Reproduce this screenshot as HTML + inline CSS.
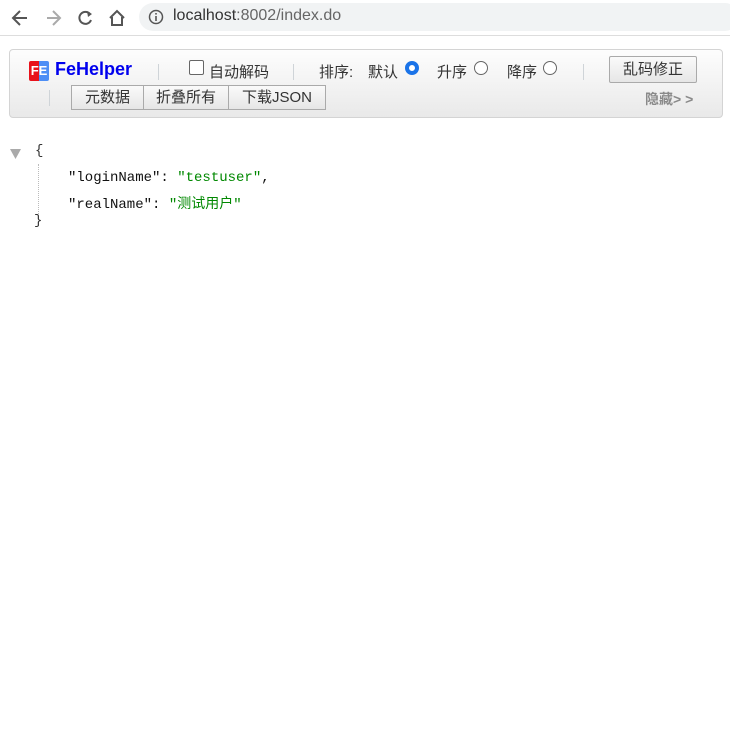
<!DOCTYPE html>
<html><head><meta charset="utf-8"><style>
body{margin:0;width:730px;height:729px;background:#fff;font-family:"Liberation Sans","Noto Sans CJK SC",sans-serif;position:relative;overflow:hidden}
.a{position:absolute;white-space:nowrap}
.sep{position:absolute;width:1px;height:16px;background:#cfd4d8}
.btn{position:absolute;box-sizing:border-box;border:1px solid #aaa;background:linear-gradient(#fafafa,#e6e6e6);font-size:14px;color:#333;text-align:center;line-height:24px}
.radio{position:absolute;width:14px;height:14px;border:1px solid #666;border-radius:50%;box-sizing:border-box;background:#fff}
.mono{font-family:"Liberation Mono","Noto Sans CJK SC",monospace;font-size:14px}
</style></head><body>
<div class="a" style="left:0;top:0;width:730px;height:35px;background:#fff;border-bottom:1px solid #ddd"></div>
<svg class="a" style="left:10px;top:8px" width="120" height="20" viewBox="0 0 120 20">
<path d="M17 10H4M10 3L3 10L10 17" stroke="#555" stroke-width="2" fill="none"/>
<path d="M37 10H50M43 3L50 10L43 17" stroke="#aaa" stroke-width="2" fill="none"/>
<path d="M80 6A6 6 0 1 0 81 12" stroke="#555" stroke-width="2" fill="none"/><path d="M77 3L82 6L78 9Z" fill="#555"/>
<path d="M100 10L107 3L114 10M102 9V17H112V9" stroke="#555" stroke-width="2" fill="none"/>
</svg>
<div class="a" style="left:139px;top:3px;width:600px;height:28px;border-radius:14px;background:#f1f3f4"></div>
<svg class="a" style="left:148px;top:9px" width="16" height="16"><circle cx="8" cy="8" r="6.5" stroke="#555" stroke-width="1.5" fill="none"/><rect x="7.2" y="7" width="1.6" height="5" fill="#555"/><rect x="7.2" y="4" width="1.6" height="1.6" fill="#555"/></svg>
<div class="a" style="left:173px;top:7px;font-size:16px;color:#333">localhost<span style="color:#666">:8002/index.do</span></div>
<div class="a" style="left:9px;top:49px;width:714px;height:69px;box-sizing:border-box;border:1px solid #d4d4d4;border-radius:4px;background:linear-gradient(#fdfdfd,#e9e9e9)"></div>
<div class="a" style="left:29px;top:61px;width:20px;height:20px;background:linear-gradient(90deg,#e8121b 50%,#4d8ef5 50%);color:#fff;font-weight:bold;font-size:13px;line-height:20px;text-align:center;border-radius:2px">FE</div>
<div class="a" style="left:55px;top:59px;font-size:18px;font-weight:bold;color:#0000ee">FeHelper</div>
<div class="sep" style="left:158px;top:64px"></div>
<div class="a" style="left:189px;top:60px;width:15px;height:15px;border:1px solid #666;border-radius:2px;box-sizing:border-box;background:#fff"></div>
<div class="a" style="left:209px;top:61px;font-size:15px;color:#333">自动解码</div>
<div class="sep" style="left:293px;top:64px"></div>
<div class="a" style="left:319px;top:61px;font-size:15px;color:#333">排序:</div>
<div class="a" style="left:368px;top:61px;font-size:15px;color:#333">默认</div>
<div class="radio" style="left:405px;top:61px;border:4px solid #1a73e8;"></div>
<div class="a" style="left:437px;top:61px;font-size:15px;color:#333">升序</div>
<div class="radio" style="left:474px;top:61px"></div>
<div class="a" style="left:507px;top:61px;font-size:15px;color:#333">降序</div>
<div class="radio" style="left:543px;top:61px"></div>
<div class="sep" style="left:583px;top:64px"></div>
<div class="btn" style="left:609px;top:56px;width:88px;height:27px;border-radius:2px;line-height:25px;font-size:15px">乱码修正</div>
<div class="sep" style="left:49px;top:90px"></div>
<div class="btn" style="left:71px;top:85px;width:73px;height:25px;font-size:15px">元数据</div>
<div class="btn" style="left:143px;top:85px;width:86px;height:25px;font-size:15px">折叠所有</div>
<div class="btn" style="left:228px;top:85px;width:98px;height:25px;font-size:15px">下载JSON</div>
<div class="a" style="left:645px;top:89px;font-size:14px;font-weight:bold;color:#8a8a8a">隐藏&gt; &gt;</div>
<svg class="a" style="left:10px;top:149px" width="11" height="10"><path d="M0 0H11L5.5 10Z" fill="#aaa"/></svg>
<div class="a" style="left:38px;top:164px;height:50px;border-left:1px dotted #bbb"></div>
<div class="a mono" style="left:35px;top:143px;color:#333">{</div>
<div class="a mono" style="left:68px;top:170px;color:#111">"loginName": <span style="color:#080">"testuser"</span>,</div>
<div class="a mono" style="left:68px;top:193px;color:#111">"realName": <span style="color:#080">"测试用户"</span></div>
<div class="a mono" style="left:34px;top:213px;color:#333">}</div>
</body></html>
